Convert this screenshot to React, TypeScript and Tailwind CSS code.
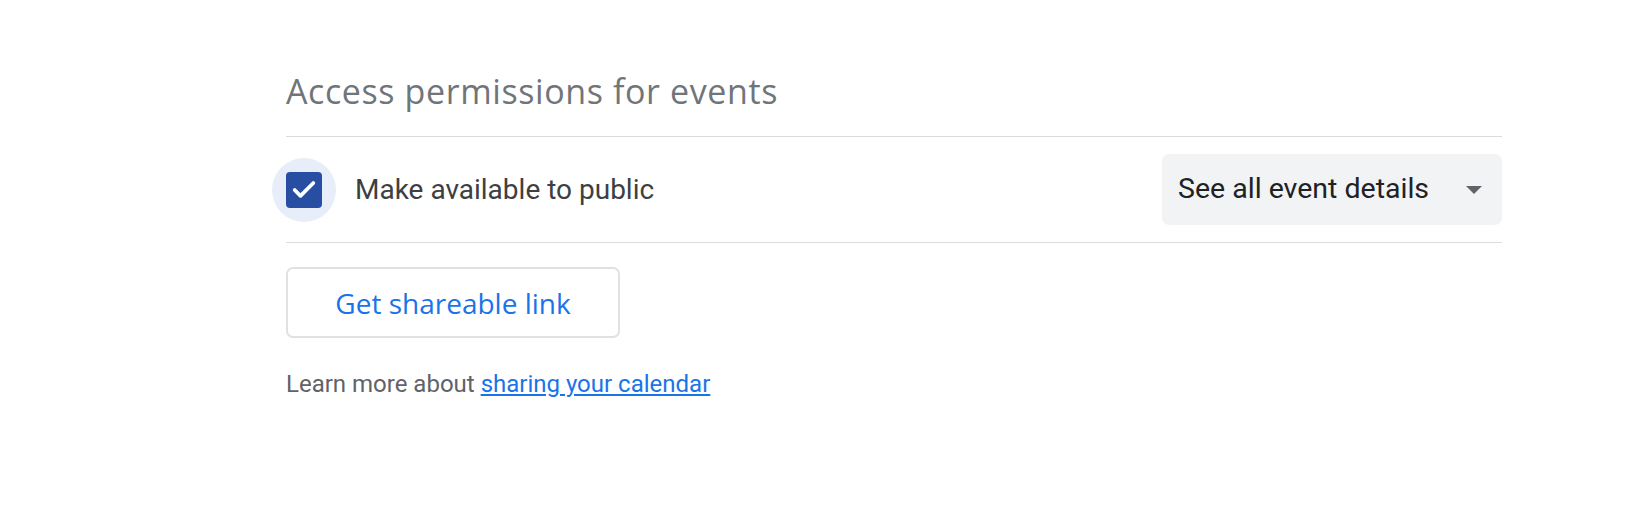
import { Check } from "lucide-react";

export default function App() {
  return (
    <div className="min-h-[514px] w-full bg-white">
      <div className="ml-[286px] w-[1216px] pt-[71px]">
        <div className="font-['Open_Sans',sans-serif] text-[34px] leading-[40px] tracking-[0.6px] text-[#70757a]">
          Access permissions for events
        </div>

        <div className="mt-[25px] border-t border-[#dadce0]" />

        <div className="flex h-[105px] items-center justify-between">
          <div className="flex items-center">
            <div className="-ml-[14px] flex h-[64px] w-[64px] items-center justify-center rounded-full bg-[#e8eef9]">
              <div className="flex h-[36px] w-[36px] items-center justify-center rounded-[4px] bg-[#284ea3]">
                <Check size={28} strokeWidth={3.2} className="text-white" />
              </div>
            </div>
            <div className="ml-[19px] font-['Roboto',sans-serif] text-[28px] text-[#3c4043]">
              Make available to public
            </div>
          </div>

          <div className="flex h-[71px] w-[340px] items-center justify-between rounded-[7px] bg-[#f1f3f4] pl-[16px] pr-[20px]">
            <span className="font-['Roboto',sans-serif] text-[28.5px] text-[#202124]">
              See all event details
            </span>
            <svg width="16" height="8" viewBox="0 0 16 8">
              <path d="M0 0 L16 0 L8 8 Z" fill="#5f6368" />
            </svg>
          </div>
        </div>

        <div className="border-t border-[#dadce0]" />

        <button
          type="button"
          className="mt-[24px] flex h-[71px] w-[334px] items-center justify-center rounded-[7px] border-2 border-[#dfe1e5] bg-white font-['Open_Sans',sans-serif] text-[28px] font-medium text-[#1a73e8]"
        >
          Get shareable link
        </button>

        <div className="mt-[32px] font-['Roboto',sans-serif] text-[24px] leading-[28px] text-[#5f6368]">
          Learn more about{" "}
          <a href="#" className="text-[#1a73e8] underline">
            sharing your calendar
          </a>
        </div>
      </div>
    </div>
  );
}
